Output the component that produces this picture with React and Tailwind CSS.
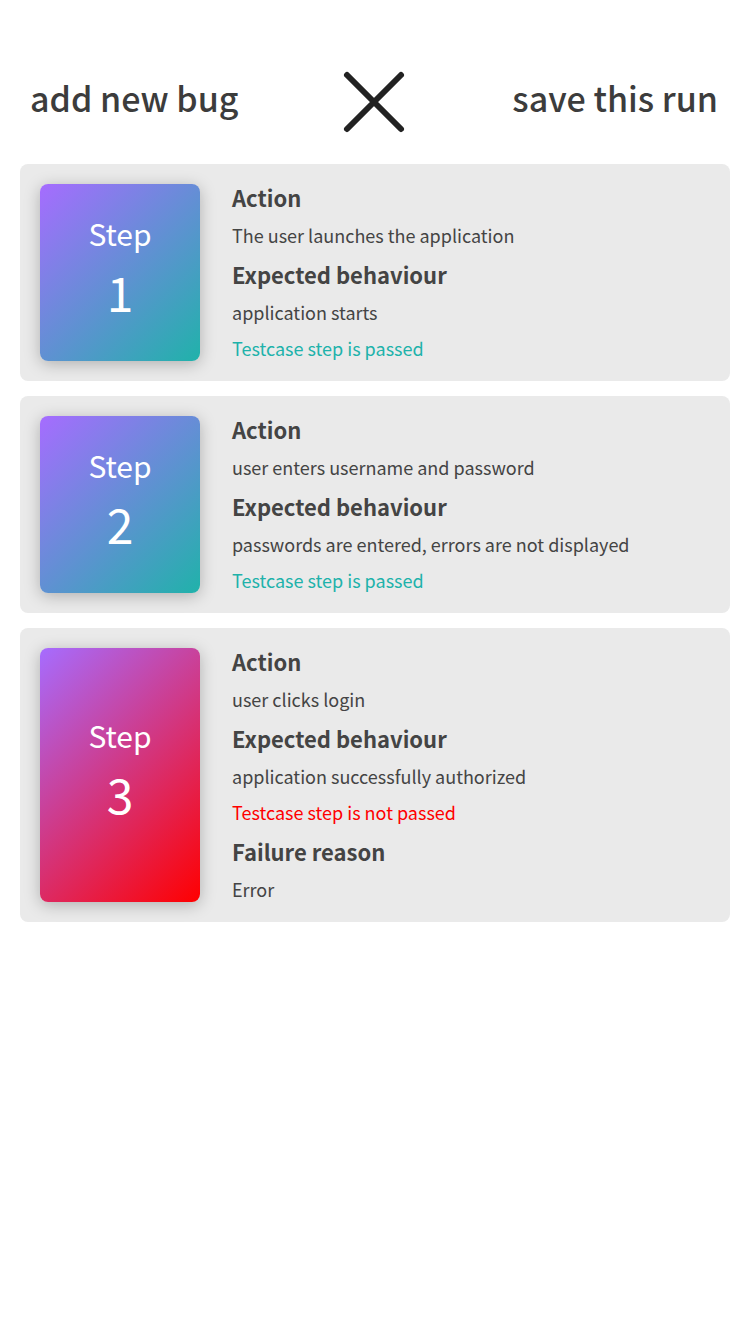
import React from "react";

const font = { fontFamily: '"Noto Sans CJK KR", "Noto Sans", sans-serif' };

function Step({ n, failed, action, expected, reason }) {
  return (
    <div className="flex rounded-[8px] bg-[#eaeaea] p-[20px]">
      <div
        className={`flex w-[160px] shrink-0 flex-col items-center justify-center rounded-[8px] pb-[14px] text-white shadow-[0_3px_16px_rgba(0,0,0,0.25)] ${
          failed
            ? "bg-linear-135/srgb from-[#a66cff] to-[#ff0000]"
            : "bg-linear-135/srgb from-[#a66cff] to-[#20b2aa]"
        }`}
      >
        <div className="text-[30px] leading-[36px]">Step</div>
        <div className="mt-[14px] text-[48px] leading-[52px]">{n}</div>
      </div>
      <div className="ml-[32px] flex flex-col text-[#444]">
        <div className="h-[26px] text-[22px] font-bold leading-[26px] text-[#444]">Action</div>
        <div className="mt-[12px] h-[26px] text-[18px] leading-[26px]">{action}</div>
        <div className="mt-[13px] h-[26px] text-[22px] font-bold leading-[26px] text-[#444]">Expected behaviour</div>
        <div className="mt-[12px] h-[26px] text-[18px] leading-[26px]">{expected}</div>
        <div
          className={`mt-[10px] h-[26px] text-[18px] leading-[26px] ${
            failed ? "text-[#ff0000]" : "text-[#20b2aa]"
          }`}
        >
          {failed ? "Testcase step is not passed" : "Testcase step is passed"}
        </div>
        {failed && (
          <>
            <div className="mt-[13px] h-[26px] text-[22px] font-bold leading-[26px] text-[#444]">Failure reason</div>
            <div className="mt-[12px] h-[26px] text-[18px] leading-[26px]">{reason}</div>
          </>
        )}
      </div>
    </div>
  );
}

export default function App() {
  return (
    <div style={font} className="min-h-[1334px] w-[750px] bg-white">
      <div className="grid h-[164px] grid-cols-[1fr_auto_1fr] items-center pl-[30px] pr-[32px] pt-[30px]">
        <div className="text-[34px] font-medium text-[#3c3c3c]">add new bug</div>
        <svg width="64" height="64" viewBox="0 0 64 64" className="mt-[10px]">
          <path d="M5 5 L59 59 M59 5 L5 59" stroke="#222" strokeWidth="6" strokeLinecap="round" />
        </svg>
        <div className="justify-self-end text-[34px] font-medium text-[#3c3c3c]">save this run</div>
      </div>
      <div className="flex flex-col gap-[15px] px-[20px]">
        <Step n={1} action="The user launches the application" expected="application starts" />
        <Step n={2} action="user enters username and password" expected="passwords are entered, errors are not displayed" />
        <Step n={3} failed action="user clicks login" expected="application successfully authorized" reason="Error" />
      </div>
    </div>
  );
}
